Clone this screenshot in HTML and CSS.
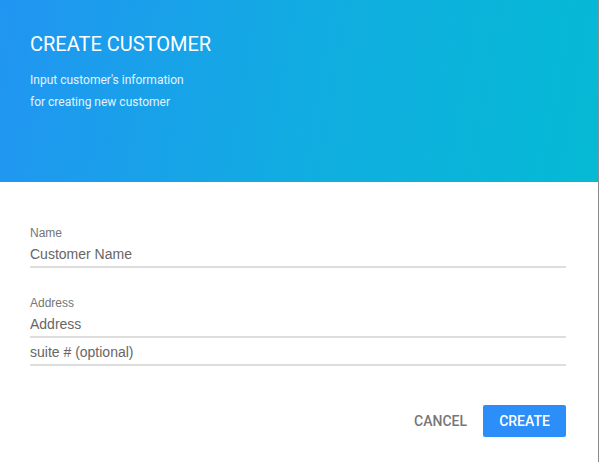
FILE: index.html
```html
<!DOCTYPE html>
<html>
<head>
<meta charset="utf-8">
<link rel="stylesheet" href="styles.css">
</head>
<body>
<div class="dialog">
  <header class="hero">
    <h1 class="title">CREATE CUSTOMER</h1>
    <p class="subtitle">Input customer's information<br>for creating new customer</p>
  </header>
  <form class="form">
    <div class="field">
      <label class="label">Name</label>
      <input class="input" type="text" placeholder="Customer Name">
    </div>
    <div class="field field-address">
      <label class="label">Address</label>
      <input class="input" type="text" placeholder="Address">
      <input class="input input-extra" type="text" placeholder="suite # (optional)">
    </div>
    <div class="actions">
      <button type="button" class="btn btn-cancel">CANCEL</button>
      <button type="button" class="btn btn-create">CREATE</button>
    </div>
  </form>
</div>
</body>
</html>
```
FILE: styles.css
```css
html, body {
  margin: 0;
  padding: 0;
  background: #ffffff;
}
body {
  width: 599px;
  height: 462px;
  overflow: hidden;
  font-family: Roboto, "Liberation Sans", sans-serif;
}
.dialog {
  width: 598px;
  height: 462px;
  border-right: 1px solid #8a8a8a;
  background: #ffffff;
}
.hero {
  height: 182px;
  box-sizing: border-box;
  padding: 32px 30px 0 30px;
  background: linear-gradient(100deg, #2195f2 0%, #10aee0 55%, #05bad4 100%);
  color: #ffffff;
}
.title {
  margin: 0;
  font-size: 20px;
  line-height: 24px;
  font-weight: 400;
  letter-spacing: 0;
}
.subtitle {
  margin: 13px 0 0 0;
  font-size: 12px;
  line-height: 22px;
  color: #e4f3fd;
}
.form {
  padding: 44px 32px 0 30px;
  display: flex;
  flex-direction: column;
}
.field {
  display: flex;
  flex-direction: column;
}
.field-address {
  margin-top: 28px;
}
.label {
  font-family: "Liberation Sans", Arial, sans-serif;
  font-size: 12px;
  line-height: 14px;
  color: #757575;
}
.input {
  margin: 2px 0 0 0;
  padding: 0;
  height: 26px;
  box-sizing: border-box;
  border: none;
  border-bottom: 2px solid #dddddd;
  outline: none;
  font-family: "Liberation Sans", Arial, sans-serif;
  font-size: 14px;
  color: #606060;
  background: transparent;
}
.input::placeholder {
  color: #666666;
  opacity: 1;
}
.actions {
  margin-top: 39px;
  display: flex;
  justify-content: flex-end;
  align-items: center;
  gap: 16px;
}
.btn {
  font-family: Roboto, "Liberation Sans", sans-serif;
  font-size: 14px;
  font-weight: 500;
  border: none;
  height: 32px;
  cursor: pointer;
}
.btn-cancel {
  background: transparent;
  color: #777777;
  padding: 0;
}
.btn-create {
  background: #2b8ef9;
  color: #ffffff;
  border-radius: 2px;
  padding: 0 16px;
  width: 83px;
}
```
